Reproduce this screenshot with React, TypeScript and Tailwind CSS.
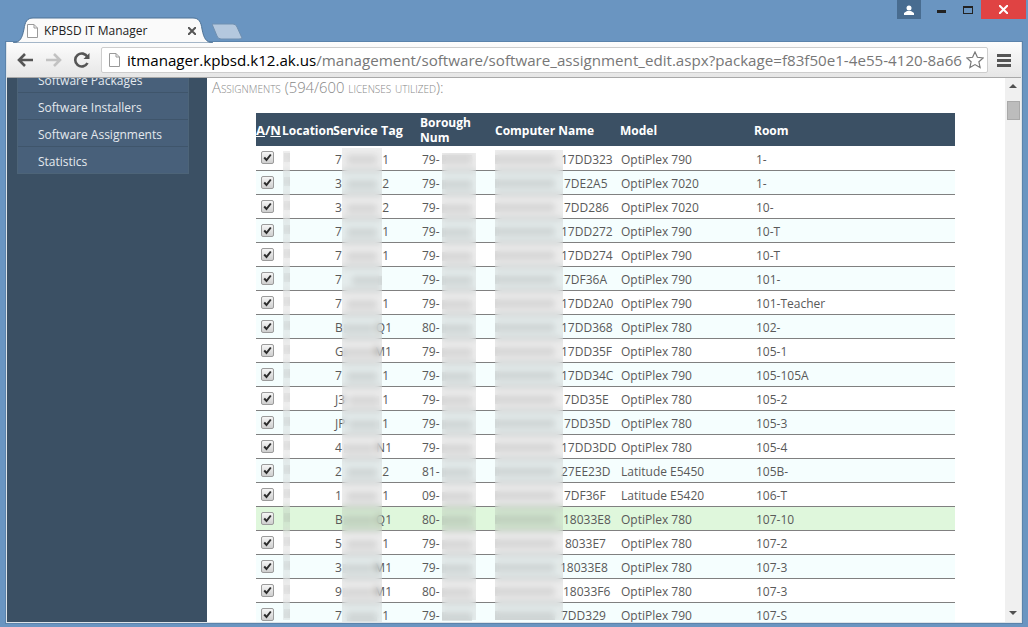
const rows = [
  { first: '7', last: '1', boro: '79-', nameX: 66, name: '17DD323', model: 'OptiPlex 790', room: '1-' },
  { first: '3', last: '2', boro: '79-', nameX: 69, name: '7DE2A5', model: 'OptiPlex 7020', room: '1-' },
  { first: '3', last: '2', boro: '79-', nameX: 69, name: '7DD286', model: 'OptiPlex 7020', room: '10-' },
  { first: '7', last: '1', boro: '79-', nameX: 66, name: '17DD272', model: 'OptiPlex 790', room: '10-T' },
  { first: '7', last: '1', boro: '79-', nameX: 66, name: '17DD274', model: 'OptiPlex 790', room: '10-T' },
  { first: '7', last: '', boro: '79-', nameX: 69, name: '7DF36A', model: 'OptiPlex 790', room: '101-' },
  { first: '7', last: '1', boro: '79-', nameX: 66, name: '17DD2A0', model: 'OptiPlex 790', room: '101-Teacher' },
  { first: 'B', last: 'Q1', boro: '80-', nameX: 66, name: '17DD368', model: 'OptiPlex 780', room: '102-' },
  { first: 'G', last: 'M1', boro: '79-', nameX: 66, name: '17DD35F', model: 'OptiPlex 780', room: '105-1' },
  { first: '7', last: '1', boro: '79-', nameX: 66, name: '17DD34C', model: 'OptiPlex 790', room: '105-105A' },
  { first: 'J3', last: '1', boro: '79-', nameX: 69, name: '7DD35E', model: 'OptiPlex 780', room: '105-2' },
  { first: 'JP', last: '1', boro: '79-', nameX: 69, name: '7DD35D', model: 'OptiPlex 780', room: '105-3' },
  { first: '4', last: 'N1', boro: '79-', nameX: 66, name: '17DD3DD', model: 'OptiPlex 780', room: '105-4' },
  { first: '2', last: '2', boro: '81-', nameX: 66, name: '27EE23D', model: 'Latitude E5450', room: '105B-' },
  { first: '1', last: '1', boro: '09-', nameX: 69, name: '7DF36F', model: 'Latitude E5420', room: '106-T' },
  { first: 'B', last: 'Q1', boro: '80-', nameX: 68, name: '18033E8', model: 'OptiPlex 780', room: '107-10', green: true },
  { first: '5', last: '1', boro: '79-', nameX: 70, name: '8033E7', model: 'OptiPlex 780', room: '107-2' },
  { first: '3', last: 'M1', boro: '79-', nameX: 65, name: '18033E8', model: 'OptiPlex 780', room: '107-3' },
  { first: '9', last: 'M1', boro: '80-', nameX: 68, name: '18033F6', model: 'OptiPlex 780', room: '107-3' },
  { first: '7', last: '1', boro: '79-', nameX: 66, name: '7DD329', model: 'OptiPlex 790', room: '107-S' },
];

function DocIcon({ className }: { className: string }) {
  return (
    <svg viewBox="0 0 11 14" className={`shrink-0 ${className}`} fill="#fff" stroke="#9a9a9a">
      <path d="M.5.5h6.5l3.5 3.5v9.500h-10z" />
      <path d="M7 .5v3.500h3.500" fill="none" />
    </svg>
  );
}

function Smudge({ width }: { width: number }) {
  return <span className="inline-block h-[9px] shrink-0 bg-[#777]/20" style={{ width }} />;
}

function Check() {
  return (
    <div className="flex h-[13px] w-[13px] items-center justify-center rounded-[2px] border border-[#9b9b9b] bg-gradient-to-b from-[#f6f6f6] to-[#cfcfcf]">
      <svg viewBox="0 0 11 11" className="h-[11px] w-[11px]" fill="none" stroke="#2c2c2c" strokeWidth="2">
        <path d="M2.200 5.500l2.300 2.500 4.300-5.500" />
      </svg>
    </div>
  );
}

function Toolbar() {
  return (
    <div className="flex h-[36px] items-center border-b border-[#a9a9a9] bg-gradient-to-b from-[#fdfdfd] to-[#e6e6e6] pt-[1px]">
      <svg viewBox="0 0 18 16" className="ml-[9px] h-[16px] w-[18px]" fill="none" stroke="#555" strokeWidth="2.600">
        <path d="M17 8H3M9 2L3 8l6 6" />
      </svg>
      <svg viewBox="0 0 18 16" className="ml-[11px] h-[16px] w-[18px]" fill="none" stroke="#c2c2c2" strokeWidth="2.600">
        <path d="M1 8h14M9 2l6 6-6 6" />
      </svg>
      <svg viewBox="0 0 18 18" className="ml-[10px] h-[18px] w-[18px]" fill="none" stroke="#555" strokeWidth="2.600">
        <path d="M14.500 12a6.500 6.500 0 1 1 0-6" />
        <path d="M16.500 2v6h-6z" fill="#555" stroke="none" />
      </svg>
      <div className="ml-[10px] flex h-[26px] w-[887px] items-center rounded-[2px] border border-[#cdcdcd] bg-white">
        <DocIcon className="ml-[7px] h-[14px] w-[11px]" />
        <div className="ml-[7px] whitespace-nowrap font-['Open_Sans'] text-[15.150px] text-[#777]">
          <span className="text-black">itmanager.kpbsd.k12.ak.us</span>/management/software/software_assignment_edit.aspx?package=f83f50e1-4e55-4120-8a66
        </div>
        <svg viewBox="0 0 18 18" className="ml-auto mr-[3px] h-[18px] w-[18px] shrink-0" fill="#fff" stroke="#777" strokeWidth="1.200">
          <path d="M9 1l2.400 5.300 5.800.6-4.300 3.900 1.200 5.700L9 13.600l-5.100 2.900 1.200-5.700L.8 6.900l5.800-.6z" />
        </svg>
      </div>
      <div className="ml-[9px] flex w-[14px] flex-col gap-[2px]">
        <div className="h-[3px] bg-[#555]" />
        <div className="h-[3px] bg-[#555]" />
        <div className="h-[3px] bg-[#555]" />
      </div>
    </div>
  );
}

function Sidebar() {
  return (
    <div className="h-full w-[200px] shrink-0 overflow-hidden bg-[#3b5064] pl-[10px]">
      <div className="-mt-[13px] w-[172px] border border-[#4d6478] bg-[#48607a] font-['Open_Sans'] text-[12px] text-[#e4e9ee]">
        {['Software Packages', 'Software Installers', 'Software Assignments', 'Statistics'].map((item, i) => (
          <div key={item} className={`flex items-center pl-[20px] pt-[4px] ${i < 3 ? 'h-[27px] border-b border-[#3f556b]' : 'h-[26px]'}`}>
            {item}
          </div>
        ))}
      </div>
    </div>
  );
}

function AssignmentsTable() {
  return (
    <div className="relative ml-[49px] mt-[17px] w-[699px] font-['Open_Sans'] text-[12px] text-[#595959]">
      <table className="w-[699px] table-fixed border-collapse">
        <colgroup>
          <col className="w-[25px]" />
          <col className="w-[51px]" />
          <col className="w-[88px]" />
          <col className="w-[75px]" />
          <col className="w-[124px]" />
          <col className="w-[135px]" />
          <col className="w-[201px]" />
        </colgroup>
        <thead>
          <tr className="h-[33px] bg-[#3b5064] text-left text-[12px] font-bold leading-[15px] text-white">
            <th className="p-0 pt-[2px] text-[13px]"><span className="underline">A</span>/<span className="underline">N</span></th>
            <th className="p-0 pl-[1px] pt-[2px]">Location</th>
            <th className="p-0 pl-[1px] pt-[2px] whitespace-nowrap text-[12.500px]">Service Tag</th>
            <th className="p-0">Borough<br />Num</th>
            <th className="p-0 pt-[2px]">Computer Name</th>
            <th className="p-0 pl-[1px] pt-[2px]">Model</th>
            <th className="p-0 pt-[2px]">Room</th>
          </tr>
        </thead>
        <tbody>
          {rows.map((row, i) => (
            <tr
              key={i}
              className={`h-[24px] border-b border-[#808080] ${row.green ? 'bg-[#dff7dc]' : i % 2 === 1 ? 'bg-[#f5fefe]' : 'bg-white'}`}
            >
              <td className="p-0 pl-[5px]"><Check /></td>
              <td className="p-0 pl-[3px]"><Smudge width={6} /></td>
              <td className="p-0 pt-[4px]">
                <div className="flex w-[60px] items-center justify-between pl-[3px]">
                  <span>{row.first}</span>
                  <Smudge width={30} />
                  <span className={row.last.length === 1 ? 'mr-[3px]' : ''}>{row.last}</span>
                </div>
              </td>
              <td className="p-0 pl-[2px] pt-[4px]">
                <div className="flex items-center">
                  <span className="w-[20px]">{row.boro}</span>
                  <Smudge width={30} />
                </div>
              </td>
              <td className="p-0 pt-[4px]">
                <div className="flex items-center">
                  <div className="shrink-0" style={{ width: row.nameX }}><Smudge width={60} /></div>
                  <span>{row.name}</span>
                </div>
              </td>
              <td className="p-0 pl-[2px] pt-[4px]">{row.model}</td>
              <td className="p-0 pl-[2px] pt-[4px]">{row.room}</td>
            </tr>
          ))}
        </tbody>
      </table>
      <div className="absolute left-[27px] top-[38px] h-[469px] w-[7px] bg-[#888]/10 backdrop-blur-[3px]" />
      <div className="absolute left-[86px] top-[35px] h-[474px] w-[40px] bg-[#888]/15 backdrop-blur-[3px]" />
      <div className="absolute left-[186px] top-[40px] h-[467px] w-[34px] bg-[#888]/15 backdrop-blur-[3px]" />
      <div className="absolute left-[239px] top-[37px] h-[470px] w-[68px] bg-[#888]/15 backdrop-blur-[3px]" />
    </div>
  );
}

export default function App() {
  return (
    <div className="h-[627px] w-[1028px] overflow-hidden bg-[#6a95c1]">
      <div className="flex h-[42px]">
        <div className="relative ml-[13px] mt-[17px] h-[26px] w-[200px]">
          <svg viewBox="0 0 200 26" className="h-[26px] w-[200px]">
            <path d="M0 26C7 25 9 22 11 12 12 5 14 1 20 1h160c6 0 8 4 9 11 2 10 4 13 11 14z" fill="#fafafa" stroke="#4f7396" />
          </svg>
          <div className="absolute inset-0 flex items-center pl-[14px] pt-[2px]">
            <DocIcon className="h-[14px] w-[11px]" />
            <span className="ml-[6px] font-['Open_Sans'] text-[12px] text-[#222]">KPBSD IT Manager</span>
            <svg viewBox="0 0 8 8" className="ml-[41px] h-[8px] w-[8px]" stroke="#555" strokeWidth="2">
              <path d="M0 0l8 8M8 0L0 8" />
            </svg>
          </div>
        </div>
        <svg viewBox="0 0 32 18" className="mt-[23px] h-[18px] w-[32px] -ml-[1px]">
          <path d="M0 1h21q3 0 4 3l5 11q0 1-3 1H9q-3 0-4-3z" fill="#b4c8de" stroke="#6f8fb0" />
        </svg>
        <div className="ml-[653px] flex h-[19px] items-start">
          <div className="flex h-[19px] w-[24px] items-center justify-center bg-[#486c90]">
            <svg viewBox="0 0 10 10" className="h-[10px] w-[10px]" fill="#fff">
              <circle cx="5" cy="3" r="2.500" />
              <path d="M0 10V8l3-2h4l3 2v2z" />
            </svg>
          </div>
          <div className="ml-[16px] mt-[10px] h-[3px] w-[9px] bg-[#222]" />
          <div className="ml-[17px] mt-[6px] h-[8px] w-[10px] border border-t-2 border-[#222]" />
          <div className="ml-[8px] flex h-[19px] w-[45px] items-center justify-center bg-[#e04343]">
            <svg viewBox="0 0 9 9" className="h-[9px] w-[9px]" stroke="#fff" strokeWidth="2">
              <path d="M0 0l9 9M9 0L0 9" />
            </svg>
          </div>
        </div>
      </div>

      <div className="ml-[6px] h-[581px] w-[1016px] border border-t-0 border-[#dde3e8] shadow-[0_0_0_1px_#5b83ab]">
        <Toolbar />
        <div className="flex h-[544px] bg-white">
          <Sidebar />
          <div className="min-w-0 flex-1 overflow-hidden">
            <div className="pl-[5px] pt-[1px] font-['Open_Sans'] text-[14.800px] font-light leading-[17px] text-[#888] [font-variant:small-caps]">
              Assignments (594/600 licenses utilized):
            </div>
            <AssignmentsTable />
          </div>
          <div className="flex w-[16px] shrink-0 flex-col items-center bg-[#f0f0f0]">
            <div className="mt-[6px] h-0 w-0 border-x-[4px] border-b-[4px] border-x-transparent border-b-[#505050]" />
            <div className="mt-[13px] h-[19px] w-[13px] border border-[#a9a9a9] bg-[#bcbcbc]" />
            <div className="mb-[7px] mt-auto h-0 w-0 border-x-[4px] border-t-[4px] border-x-transparent border-t-[#505050]" />
          </div>
        </div>
      </div>
    </div>
  );
}
